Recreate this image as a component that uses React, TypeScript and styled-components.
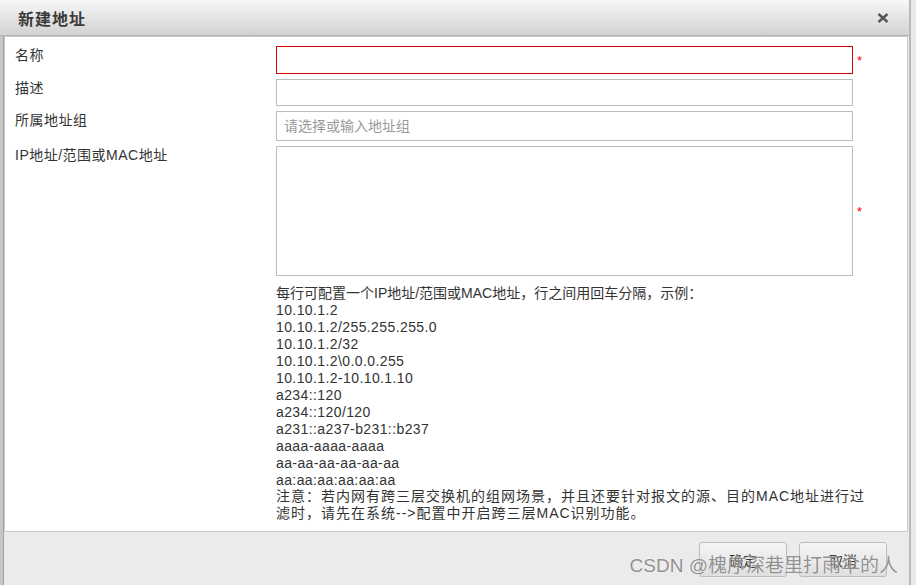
import styled, { createGlobalStyle } from 'styled-components';

const GlobalStyle = createGlobalStyle`
  html, body {
    margin: 0;
    padding: 0;
    background-color: #e9e9e9;
  }
  body {
    font-family: "Liberation Sans", Arial, "Noto Sans CJK SC", sans-serif;
    font-size: 14px;
    color: #333;
  }
  * {
    box-sizing: border-box;
  }
`;

const StyledWindow = styled.div`
  position: relative;
  width: 911px;
  height: 585px;
  display: flex;
  flex-direction: column;
  border-right: 2px solid #b9b9b9;
  background-color: #ebebeb;
  overflow: hidden;
`;

const StyledTitleBar = styled.div`
  flex: none;
  height: 36px;
  display: flex;
  align-items: center;
  justify-content: space-between;
  padding: 0 20px 0 18px;
  background: linear-gradient(#f7f7f7, #d2d2d2);
  border-bottom: 1px solid #b6b6b6;
`;

const StyledTitle = styled.h3`
  margin: 0;
  font-family: "Noto Sans CJK SC", sans-serif;
  font-size: 16px;
  font-weight: bold;
  letter-spacing: 1px;
  color: #3a3a3a;
`;

const StyledClose = styled.button`
  display: flex;
  padding: 0;
  border: none;
  background: none;
  cursor: pointer;
`;

const StyledBody = styled.div`
  flex: 1;
  display: flex;
  flex-direction: column;
  border-left: 3px solid #c6c6c6;
  box-shadow: inset 1px 0 0 #a2a2a2;
  padding-right: 1px;
`;

const StyledPanel = styled.div`
  flex: none;
  height: 496px;
  margin-left: 1px;
  padding: 9px 0 0 10px;
  background-color: white;
  border: 1px solid #c9c9c9;
`;

const StyledForm = styled.div`
  display: flex;
  flex-direction: column;
  gap: 5px;
`;

const StyledFieldRow = styled.div`
  display: grid;
  grid-template-columns: 261px 577px 14px;
  align-items: start;
`;

const StyledLabel = styled.label`
  line-height: 19px;
  letter-spacing: 0.5px;
  color: #333;
`;

const StyledInput = styled.input<{ $height: number; $invalid?: boolean }>`
  width: 577px;
  height: ${(p) => p.$height}px;
  margin: 0;
  padding: 0 7px;
  border: 1px solid ${(p) => (p.$invalid ? '#d20000' : '#bdbdbd')};
  outline: none;
  font-family: inherit;
  font-size: 14px;
  color: #333;
  &::placeholder {
    color: #9a9a9a;
  }
`;

const StyledTextArea = styled.textarea`
  display: block;
  width: 577px;
  height: 130px;
  margin: 0;
  border: 1px solid #bdbdbd;
  outline: none;
  resize: none;
  font-family: inherit;
  font-size: 14px;
`;

const StyledStar = styled.span`
  align-self: center;
  margin-left: 4px;
  font-size: 13px;
  line-height: 13px;
  color: #f00;
`;

const StyledHelp = styled.div`
  margin-top: 9px;
  padding-left: 261px;
  line-height: 17px;
  font-size: 14px;
  color: #333;
  white-space: nowrap;
`;

const StyledExample = styled.div`
  letter-spacing: 0.4px;
`;

const StyledNote = styled.div`
  margin-top: -1px;
  letter-spacing: 1px;
`;

const StyledFooter = styled.div`
  flex: 1;
  display: flex;
  justify-content: flex-end;
  align-items: flex-start;
  gap: 12px;
  padding: 10px 21px 0 0;
`;

const StyledButton = styled.button`
  width: 88px;
  height: 35px;
  border: 1px solid #bdbdbd;
  border-radius: 3px;
  background: linear-gradient(#f5f5f5, #dfdfdf);
  font-family: inherit;
  font-size: 14px;
  color: #333;
  cursor: pointer;
`;

const StyledWatermark = styled.div`
  position: absolute;
  right: 11px;
  bottom: 8px;
  font-size: 19px;
  line-height: 22px;
  color: rgba(115, 115, 115, 0.8);
  text-shadow: 0 0 1px #fff;
  pointer-events: none;
`;

const examples = [
  '10.10.1.2',
  '10.10.1.2/255.255.255.0',
  '10.10.1.2/32',
  '10.10.1.2\\0.0.0.255',
  '10.10.1.2-10.10.1.10',
  'a234::120',
  'a234::120/120',
  'a231::a237-b231::b237',
  'aaaa-aaaa-aaaa',
  'aa-aa-aa-aa-aa-aa',
  'aa:aa:aa:aa:aa:aa',
];

const App = () => {
  return (
    <>
      <GlobalStyle />
      <StyledWindow>
        <StyledTitleBar>
          <StyledTitle>新建地址</StyledTitle>
          <StyledClose aria-label="关闭">
            <svg width="12" height="10" viewBox="0 0 12 10">
              <path d="M1.5 1 L10.5 9 M10.5 1 L1.5 9" stroke="#555" strokeWidth="2.4" />
            </svg>
          </StyledClose>
        </StyledTitleBar>

        <StyledBody>
          <StyledPanel>
            <StyledForm>
              <StyledFieldRow>
                <StyledLabel>名称</StyledLabel>
                <StyledInput $height={28} $invalid />
                <StyledStar>*</StyledStar>
              </StyledFieldRow>
              <StyledFieldRow>
                <StyledLabel>描述</StyledLabel>
                <StyledInput $height={27} />
              </StyledFieldRow>
              <StyledFieldRow>
                <StyledLabel>所属地址组</StyledLabel>
                <StyledInput $height={30} placeholder="请选择或输入地址组" />
              </StyledFieldRow>
              <StyledFieldRow>
                <StyledLabel>IP地址/范围或MAC地址</StyledLabel>
                <StyledTextArea />
                <StyledStar>*</StyledStar>
              </StyledFieldRow>
            </StyledForm>

            <StyledHelp>
              <div>每行可配置一个IP地址/范围或MAC地址，行之间用回车分隔，示例：</div>
              {examples.map((line) => (
                <StyledExample key={line}>{line}</StyledExample>
              ))}
              <StyledNote>
                注意：若内网有跨三层交换机的组网场景，并且还要针对报文的源、目的MAC地址进行过
                <br />
                滤时，请先在系统--&gt;配置中开启跨三层MAC识别功能。
              </StyledNote>
            </StyledHelp>
          </StyledPanel>

          <StyledFooter>
            <StyledButton>确定</StyledButton>
            <StyledButton>取消</StyledButton>
          </StyledFooter>
        </StyledBody>

        <StyledWatermark>CSDN @槐序深巷里打雨伞的人</StyledWatermark>
      </StyledWindow>
    </>
  );
};

export default App;
